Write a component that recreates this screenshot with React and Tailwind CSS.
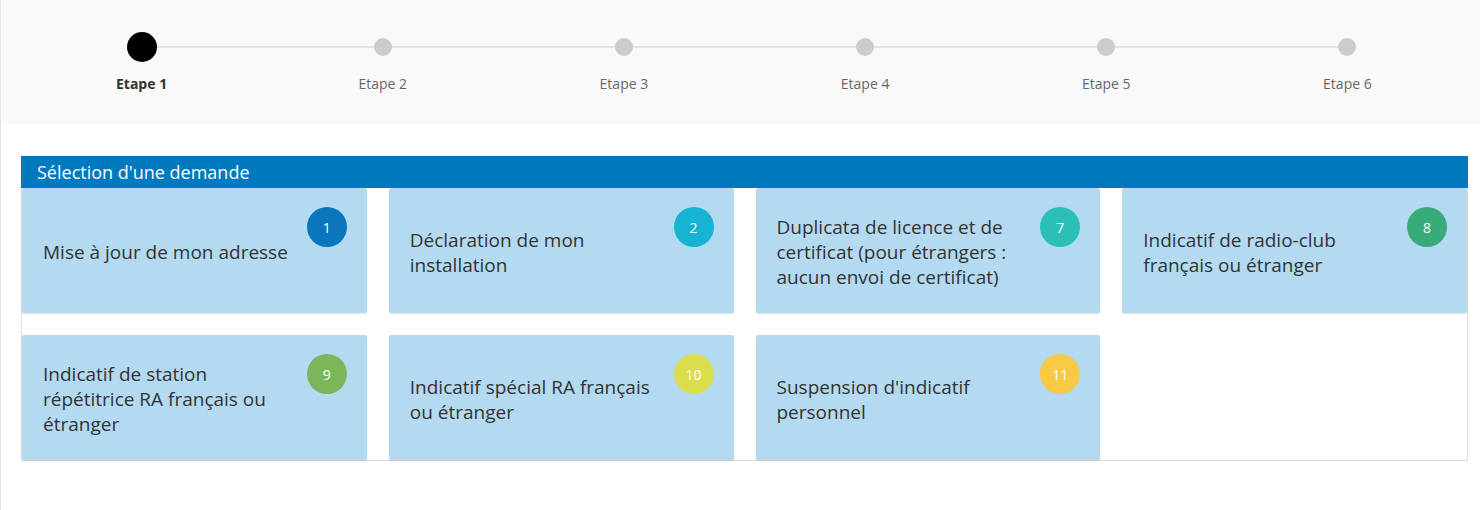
import React from "react";

const STEPS = ["Etape 1", "Etape 2", "Etape 3", "Etape 4", "Etape 5", "Etape 6"];

const DEMANDES = [
  { n: 1, label: "Mise à jour de mon adresse", color: "bg-[#0a77bd]" },
  { n: 2, label: "Déclaration de mon installation", color: "bg-[#16b4d2]" },
  { n: 7, label: "Duplicata de licence et de certificat (pour étrangers : aucun envoi de certificat)", color: "bg-[#2cbfb7]" },
  { n: 8, label: "Indicatif de radio-club français ou étranger", color: "bg-[#38ab7b]" },
  { n: 9, label: "Indicatif de station répétitrice RA français ou étranger", color: "bg-[#7ab75b]" },
  { n: 10, label: "Indicatif spécial RA français ou étranger", color: "bg-[#dcdd4e]" },
  { n: 11, label: "Suspension d'indicatif personnel", color: "bg-[#f8c945]" },
];

function Stepper() {
  return (
    <div className="h-[124px] bg-[#f9f9f9]">
      <div className="relative ml-[20px] mr-[12px] grid grid-cols-6 pt-[32px]">
        <div className="absolute left-[8.333%] right-[8.333%] top-[46px] h-[2px] bg-[#e3e3e3]" />
        {STEPS.map((s, i) => (
          <div key={s} className="relative flex flex-col items-center">
            <div className="flex h-[30px] items-center justify-center">
              {i === 0 ? (
                <div className="h-[30px] w-[30px] rounded-full bg-black" />
              ) : (
                <div className="h-[18px] w-[18px] rounded-full bg-[#cccccc]" />
              )}
            </div>
            <div
              className={
                "mt-[12px] text-[14px] leading-[20px] " +
                (i === 0 ? "font-bold text-[#333]" : "text-[#666]")
              }
            >
              {s}
            </div>
          </div>
        ))}
      </div>
    </div>
  );
}

function DemandeCard({ item }) {
  return (
    <div className="relative flex h-[125px] items-center rounded-[2px] bg-[#b3daf0] pl-[21px] pr-[76px] pt-[4px] shadow-[0_1px_2px_rgba(0,0,0,0.12)]">
      <div className="text-[19px] leading-[25px] text-[#333]">{item.label}</div>
      <div
        className={
          "absolute right-[20px] top-[19px] flex h-[40px] w-[40px] items-center justify-center rounded-full text-[14px] text-white " +
          item.color
        }
      >
        {item.n}
      </div>
    </div>
  );
}

export default function App() {
  return (
    <div
      className="min-h-[510px] border-l border-[#e5e5e5] bg-white"
      style={{ fontFamily: '"Open Sans", "Noto Sans", sans-serif' }}
    >
      <Stepper />
      <div className="ml-[20px] mr-[12px] mt-[32px] border border-t-0 border-[#dddddd]">
        <div className="-mx-px flex h-[32px] items-center bg-[#0079bf] px-[16px] text-[18px] text-white">
          Sélection d'une demande
        </div>
        <div className="grid grid-cols-4 gap-[22px]">
          {DEMANDES.map((d) => (
            <DemandeCard key={d.n} item={d} />
          ))}
        </div>
      </div>
    </div>
  );
}
